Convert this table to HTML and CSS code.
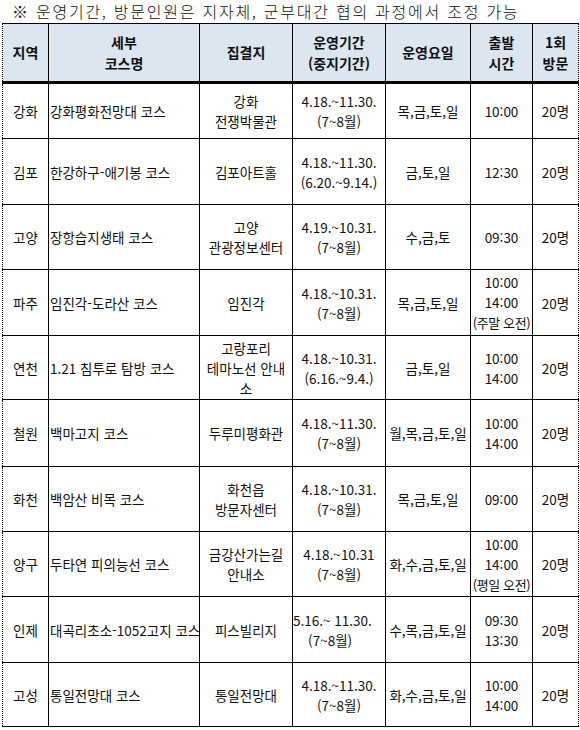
FILE: index.html
```html
<!DOCTYPE html>
<html lang="ko">
<head>
<meta charset="utf-8">
<title>운영 코스</title>
<link rel="stylesheet" href="styles.css">
</head>
<body>
<div class="page">
  <p class="note">※ 운영기간, 방문인원은 지자체, 군부대간 협의 과정에서 조정 가능</p>
  <table class="courses">
    <colgroup>
      <col class="c-region">
      <col class="c-course">
      <col class="c-meet">
      <col class="c-period">
      <col class="c-days">
      <col class="c-time">
      <col class="c-count">
    </colgroup>
    <thead>
      <tr class="head">
        <th>지역</th>
        <th>세부<br>코스명</th>
        <th>집결지</th>
        <th>운영기간<br>(중지기간)</th>
        <th>운영요일</th>
        <th>출발<br>시간</th>
        <th>1회<br>방문</th>
      </tr>
    </thead>
    <tbody>
      <tr class="r1">
        <td>강화</td>
        <td class="course">강화평화전망대 코스</td>
        <td>강화<br>전쟁박물관</td>
        <td>4.18.~11.30.<br>(7~8월)</td>
        <td>목,금,토,일</td>
        <td>10:00</td>
        <td>20명</td>
      </tr>
      <tr class="r2">
        <td>김포</td>
        <td class="course">한강하구-애기봉 코스</td>
        <td>김포아트홀</td>
        <td>4.18.~11.30.<br>(6.20.~9.14.)</td>
        <td>금,토,일</td>
        <td>12:30</td>
        <td>20명</td>
      </tr>
      <tr class="r3">
        <td>고양</td>
        <td class="course">장항습지생태 코스</td>
        <td>고양<br>관광정보센터</td>
        <td>4.19.~10.31.<br>(7~8월)</td>
        <td>수,금,토</td>
        <td>09:30</td>
        <td>20명</td>
      </tr>
      <tr class="r4">
        <td>파주</td>
        <td class="course">임진각-도라산 코스</td>
        <td>임진각</td>
        <td>4.18.~10.31.<br>(7~8월)</td>
        <td>목,금,토,일</td>
        <td>10:00<br>14:00<br><span class="tight">(주말 오전)</span></td>
        <td>20명</td>
      </tr>
      <tr class="r5">
        <td>연천</td>
        <td class="course">1.21 침투로 탐방 코스</td>
        <td>고랑포리<br>테마노선 안내<br>소</td>
        <td>4.18.~10.31.<br>(6.16.~9.4.)</td>
        <td>금,토,일</td>
        <td>10:00<br>14:00</td>
        <td>20명</td>
      </tr>
      <tr class="r6">
        <td>철원</td>
        <td class="course">백마고지 코스</td>
        <td>두루미평화관</td>
        <td>4.18.~11.30.<br>(7~8월)</td>
        <td>월,목,금,토,일</td>
        <td>10:00<br>14:00</td>
        <td>20명</td>
      </tr>
      <tr class="r7">
        <td>화천</td>
        <td class="course">백암산 비목 코스</td>
        <td>화천읍<br>방문자센터</td>
        <td>4.18.~10.31.<br>(7~8월)</td>
        <td>목,금,토,일</td>
        <td>09:00</td>
        <td>20명</td>
      </tr>
      <tr class="r8">
        <td>양구</td>
        <td class="course">두타연 피의능선 코스</td>
        <td>금강산가는길<br>안내소</td>
        <td>4.18.~10.31<br>(7~8월)</td>
        <td>화,수,금,토,일</td>
        <td>10:00<br>14:00<br><span class="tight">(평일 오전)</span></td>
        <td>20명</td>
      </tr>
      <tr class="r9">
        <td>인제</td>
        <td class="course">대곡리초소-1052고지 코스</td>
        <td>피스빌리지</td>
        <td class="left">5.16.~ 11.30.<br>&nbsp;&nbsp;&nbsp;&nbsp;(7~8월)</td>
        <td>수,목,금,토,일</td>
        <td>09:30<br>13:30</td>
        <td>20명</td>
      </tr>
      <tr class="r10">
        <td>고성</td>
        <td class="course">통일전망대 코스</td>
        <td>통일전망대</td>
        <td>4.18.~11.30.<br>(7~8월)</td>
        <td>화,수,금,토,일</td>
        <td>10:00<br>14:00</td>
        <td>20명</td>
      </tr>
    </tbody>
  </table>
</div>
</body>
</html>
```

FILE: styles.css
```css
html, body {
  margin: 0;
  padding: 0;
  background: #ffffff;
}

body {
  font-family: "Noto Sans CJK KR", "Noto Sans", sans-serif;
  color: #111111;
}

.page {
  width: 580px;
  padding-left: 2px;
}

.note {
  margin: 0;
  height: 23px;
  padding-left: 10px;
  font-size: 16px;
  font-weight: 300;
  line-height: 23px;
  letter-spacing: 1.75px;
  white-space: nowrap;
}

.courses {
  border-collapse: collapse;
  table-layout: fixed;
  width: 576px;
  font-size: 13.5px;
  line-height: 20px;
  border-top: 1px solid #000;
  border-bottom: 1px solid #000;
  border-left: 1px dotted #000;
  border-right: 1px dotted #000;
}

.c-region { width: 46px; }
.c-course { width: 151px; }
.c-meet { width: 93px; }
.c-period { width: 93px; }
.c-days { width: 85px; }
.c-time { width: 62px; }
.c-count { width: 46px; }

.courses th,
.courses td {
  padding: 0;
  text-align: center;
  vertical-align: middle;
  white-space: nowrap;
  overflow: visible;
  border-left: 1px solid #000;
  border-bottom: 1px solid #000;
}

.courses th:first-child,
.courses td:first-child {
  border-left: 1px dotted #000;
}

.courses th {
  background: #dce6f1;
  font-weight: 700;
  font-size: 14px;
  line-height: 21px;
  border-bottom: 3px solid #000;
}

.head { height: 59px; }
.r1 { height: 56px; }
.r2 { height: 66px; }
.r3 { height: 65px; }
.r4 { height: 66px; }
.r5 { height: 64px; }
.r6 { height: 67px; }
.r7 { height: 65px; }
.r8 { height: 65px; }
.r9 { height: 66px; }
.r10 { height: 64px; }

.courses td.course {
  text-align: left;
  padding-left: 1px;
}

.courses td.left {
  text-align: left;
}

.tight {
  letter-spacing: -0.4px;
  font-size: 13px;
}
```
